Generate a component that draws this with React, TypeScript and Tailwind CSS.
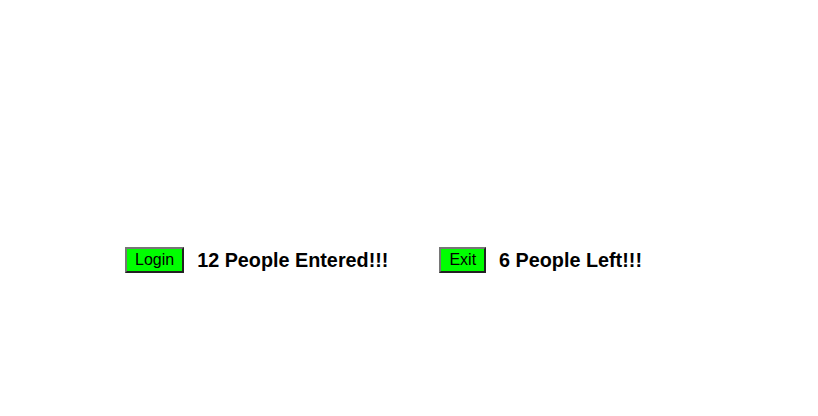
export default function App() {
  return (
    <div className="h-[416px] w-[818px] bg-white pl-[125px] pt-[247px] font-['Liberation_Sans',Arial,sans-serif] text-black">
      <div className="flex items-center">
        <button className="border-2 border-t-[#767676] border-l-[#767676] border-b-[#222] border-r-[#222] bg-[#00ff00] px-2 py-0.5 text-[16px] leading-[18px]">
          Login
        </button>
        <span className="ml-[13px] text-[19.8px] font-bold leading-[24px]">12 People Entered!!!</span>
        <button className="ml-[51px] border-2 border-t-[#767676] border-l-[#767676] border-b-[#222] border-r-[#222] bg-[#00ff00] px-2 py-0.5 text-[16px] leading-[18px]">
          Exit
        </button>
        <span className="ml-[13px] text-[19.8px] font-bold leading-[24px]">6 People Left!!!</span>
      </div>
    </div>
  );
}
